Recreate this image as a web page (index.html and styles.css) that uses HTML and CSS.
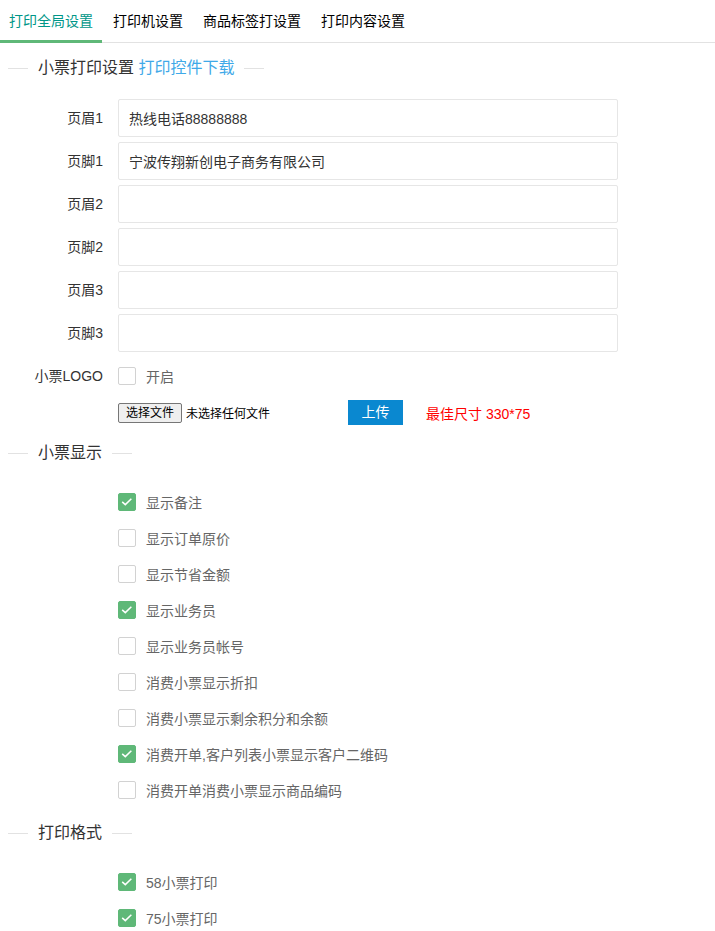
FILE: index.html
```html
<!DOCTYPE html>
<html lang="zh-CN">
<head>
<meta charset="utf-8">
<title>打印设置</title>
<link rel="stylesheet" href="styles.css">
</head>
<body>
<ul class="tabs">
  <li class="tab active">打印全局设置</li>
  <li class="tab">打印机设置</li>
  <li class="tab">商品标签打设置</li>
  <li class="tab">打印内容设置</li>
</ul>

<div class="field-title first">
  <span class="line"></span>
  <span class="legend">小票打印设置 <a class="link">打印控件下载</a></span>
  <span class="line"></span>
</div>

<div class="form">
  <div class="row"><label class="label">页眉1</label><input class="input" value="热线电话88888888"></div>
  <div class="row"><label class="label">页脚1</label><input class="input" value="宁波传翔新创电子商务有限公司"></div>
  <div class="row"><label class="label">页眉2</label><input class="input" value=""></div>
  <div class="row"><label class="label">页脚2</label><input class="input" value=""></div>
  <div class="row"><label class="label">页眉3</label><input class="input" value=""></div>
  <div class="row"><label class="label">页脚3</label><input class="input" value=""></div>
  <div class="row row-check"><label class="label">小票LOGO</label>
    <span class="check"><span class="box"></span><span class="check-text">开启</span></span>
  </div>
  <div class="row row-file">
    <span class="file-btn">选择文件</span><span class="file-name">未选择任何文件</span>
    <span class="upload">上传</span>
    <span class="hint">最佳尺寸 330*75</span>
  </div>
</div>

<div class="field-title second">
  <span class="line"></span>
  <span class="legend">小票显示</span>
  <span class="line"></span>
</div>

<div class="checks">
  <div class="check-row"><span class="box on"><svg viewBox="0 0 18 18"><path d="M3.6 8.8 L7.1 12 L13.9 5.4"/></svg></span><span class="check-text">显示备注</span></div>
  <div class="check-row"><span class="box"></span><span class="check-text">显示订单原价</span></div>
  <div class="check-row"><span class="box"></span><span class="check-text">显示节省金额</span></div>
  <div class="check-row"><span class="box on"><svg viewBox="0 0 18 18"><path d="M3.6 8.8 L7.1 12 L13.9 5.4"/></svg></span><span class="check-text">显示业务员</span></div>
  <div class="check-row"><span class="box"></span><span class="check-text">显示业务员帐号</span></div>
  <div class="check-row"><span class="box"></span><span class="check-text">消费小票显示折扣</span></div>
  <div class="check-row"><span class="box"></span><span class="check-text">消费小票显示剩余积分和余额</span></div>
  <div class="check-row"><span class="box on"><svg viewBox="0 0 18 18"><path d="M3.6 8.8 L7.1 12 L13.9 5.4"/></svg></span><span class="check-text">消费开单,客户列表小票显示客户二维码</span></div>
  <div class="check-row"><span class="box"></span><span class="check-text">消费开单消费小票显示商品编码</span></div>
</div>

<div class="field-title third">
  <span class="line"></span>
  <span class="legend">打印格式</span>
  <span class="line"></span>
</div>

<div class="checks">
  <div class="check-row"><span class="box on"><svg viewBox="0 0 18 18"><path d="M3.6 8.8 L7.1 12 L13.9 5.4"/></svg></span><span class="check-text">58小票打印</span></div>
  <div class="check-row"><span class="box on"><svg viewBox="0 0 18 18"><path d="M3.6 8.8 L7.1 12 L13.9 5.4"/></svg></span><span class="check-text">75小票打印</span></div>
</div>
</body>
</html>
```

FILE: styles.css
```css
* { box-sizing: border-box; }

body {
  margin: 0;
  background: #fff;
  font-family: "Liberation Sans", "Noto Sans CJK SC", sans-serif;
  font-size: 14px;
  color: #333;
}

.tabs {
  list-style: none;
  margin: 0;
  padding: 0;
  display: flex;
  gap: 2px;
  height: 43px;
  border-bottom: 1px solid #e2e2e2;
}

.tab {
  position: relative;
  padding: 0 9px;
  height: 42px;
  line-height: 42px;
  font-size: 14px;
  color: #000;
  white-space: nowrap;
}

.tab.active { color: #009688; }

.tab.active::after {
  content: "";
  position: absolute;
  left: 0;
  right: 0;
  bottom: -1px;
  height: 3px;
  background: #5fb878;
}

.field-title {
  display: flex;
  align-items: center;
  height: 22px;
  padding-left: 8px;
}

.field-title.first { margin-top: 14px; margin-bottom: 20px; }
.field-title.second { margin-top: 17px; margin-bottom: 20px; }
.field-title.third { margin-top: 14px; margin-bottom: 20px; }

.field-title .line {
  width: 20px;
  height: 1px;
  background: #e2e2e2;
}

.field-title .legend {
  padding: 0 10px;
  font-size: 16px;
  line-height: 22px;
  color: #333;
  white-space: nowrap;
}

.link { color: #3fa9e8; text-decoration: none; }

.row {
  display: flex;
  align-items: center;
  height: 38px;
  margin-bottom: 5px;
}

.label {
  width: 103px;
  text-align: right;
  color: #333;
  font-size: 14px;
  line-height: 18px;
  margin-right: 15px;
  margin-top: -1px;
  flex: none;
}

.input {
  width: 500px;
  height: 38px;
  border: 1px solid #e6e6e6;
  border-radius: 2px;
  padding: 0 10px;
  font-family: inherit;
  font-size: 14px;
  color: #333;
  outline: none;
  background: #fff;
}

.row-check .check { display: flex; align-items: center; }

.box {
  width: 18px;
  height: 18px;
  border: 1px solid #d2d2d2;
  border-radius: 2px;
  background: #fff;
  flex: none;
  display: flex;
  align-items: center;
  justify-content: center;
}

.box.on {
  background: #5fb878;
  border-color: #5fb878;
}

.box svg {
  width: 18px;
  height: 18px;
  fill: none;
  stroke: #fff;
  stroke-width: 1.7;
}

.check-text {
  margin-left: 10px;
  color: #666;
  font-size: 14px;
}

.row-file {
  height: 25px;
  padding-left: 118px;
}

.file-btn {
  display: inline-block;
  width: 64px;
  height: 20px;
  line-height: 18px;
  text-align: center;
  font-size: 12px;
  color: #000;
  background: #efefef;
  border: 1px solid #767676;
  border-radius: 2px;
}

.file-name {
  margin-left: 4px;
  font-size: 12px;
  color: #000;
  width: 162px;
}

.upload {
  display: inline-block;
  width: 55px;
  height: 25px;
  line-height: 25px;
  text-align: center;
  background: #0a88d0;
  color: #fff;
  font-size: 14px;
}

.hint {
  margin-left: 23px;
  color: #ff0000;
  font-size: 14px;
}

.checks { padding-left: 118px; }

.check-row {
  display: flex;
  align-items: center;
  height: 36px;
}
```
